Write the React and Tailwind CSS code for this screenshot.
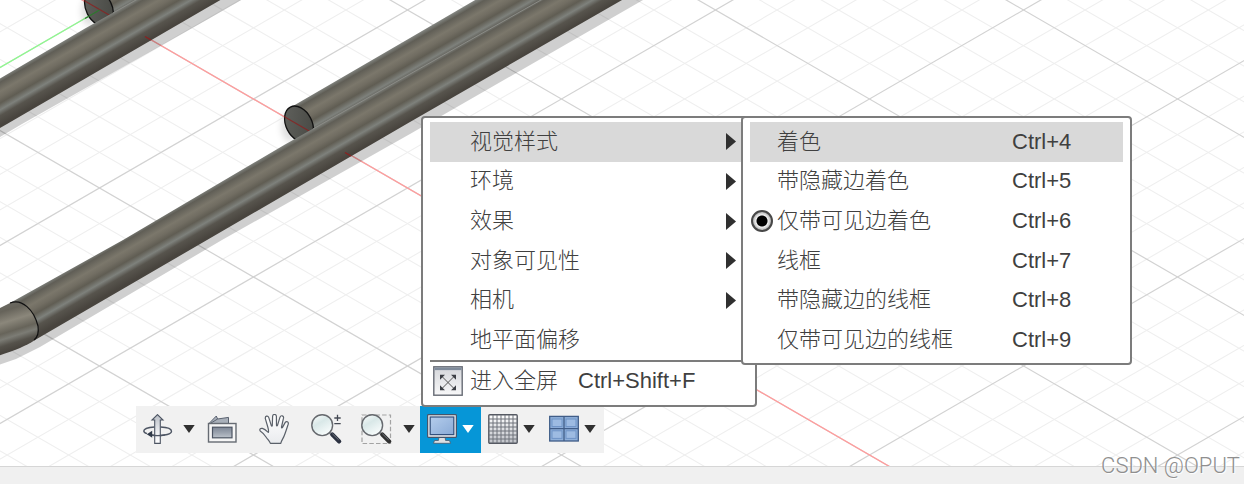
import clsx from 'clsx';

const viewItems = [
  { label: '视觉样式', submenu: true, active: true },
  { label: '环境', submenu: true },
  { label: '效果', submenu: true },
  { label: '对象可见性', submenu: true },
  { label: '相机', submenu: true },
  { label: '地平面偏移' },
];

const visualStyles = [
  { label: '着色', shortcut: 'Ctrl+4', active: true },
  { label: '带隐藏边着色', shortcut: 'Ctrl+5' },
  { label: '仅带可见边着色', shortcut: 'Ctrl+6', checked: true },
  { label: '线框', shortcut: 'Ctrl+7' },
  { label: '带隐藏边的线框', shortcut: 'Ctrl+8' },
  { label: '仅带可见边的线框', shortcut: 'Ctrl+9' },
];

// Ground plane: every fifth line is a major one
const ORIGIN = { x: 253.5, y: 99 };
const STEP = 61.6;
const SLOPE = 89 / 154;
const REACH = 1600;
const gridSteps = Array.from({ length: 81 }, (_, i) => i - 40);

function GridLines({ major }) {
  return (
    <g stroke={major ? '#d2d2d2' : '#efefef'} strokeWidth={major ? 1.2 : 1.1}>
      {gridSteps
        .filter((k) => (k % 5 === 0) === major)
        .map((k) => {
          const x = ORIGIN.x + k * STEP;
          const dy = REACH * SLOPE;
          return (
            <g key={k}>
              <line x1={x - REACH} y1={ORIGIN.y - dy} x2={x + REACH} y2={ORIGIN.y + dy} />
              <line x1={x - REACH} y1={ORIGIN.y + dy} x2={x + REACH} y2={ORIGIN.y - dy} />
            </g>
          );
        })}
    </g>
  );
}

function Tubes({ transform }) {
  return (
    <g transform={transform}>
      {/* shadow on the ground */}
      <path d="M-10 368 L16 359 L40 347 L222 240 L410 134 L650 -4 L600 -4 L30 330 L-10 350 Z" fill="#000" fillOpacity="0.19" />
      <ellipse cx="290" cy="127" rx="9" ry="15" fill="#000" fillOpacity="0.12" filter="url(#soft)" />

      {/* rear tube */}
      <path d="M293 106 L410 38 L482 -4 L560 -4 L410 80 L305 142 Z" fill="url(#rear)" />
      <ellipse cx="299" cy="124" rx="13" ry="19" transform="rotate(-27 299 124)" fill="url(#face)" stroke="#111" strokeWidth="1.3" />
      <path d="M284 116.6 L310 131.6" stroke="#8d1f1f" strokeWidth="1.1" strokeOpacity="0.8" />

      {/* front tube */}
      <path d="M10 303 L123 240 L285 144.5 L410 74 L548 -4 L629 -4 L410 122 L207 240 L35 340 Z" fill="url(#front)" />
      <path d="M313 129 L410 74 L548 -4" stroke="#8a8b86" strokeWidth="1" fill="none" />

      {/* elbow */}
      <path d="M-10 313 L10 303 C22 298 34 310 38 326 C39 333 38 337 35 340 C24 347 12 352 -10 358 Z" fill="url(#elbow)" />
      <path d="M10 303 C22 298 34 310 38 326 C39 333 38 337 34 340" stroke="#111" strokeWidth="1.2" fill="none" />
      <path d="M345 152.5 L351 156" stroke="#8d1f1f" strokeWidth="1.2" />
    </g>
  );
}

function TubeStops() {
  return (
    <>
      <stop offset="0" stopColor="#858783" />
      <stop offset="0.05" stopColor="#74756f" />
      <stop offset="0.11" stopColor="#605e56" />
      <stop offset="0.3" stopColor="#7b776b" />
      <stop offset="0.42" stopColor="#716d62" />
      <stop offset="0.54" stopColor="#605d53" />
      <stop offset="0.68" stopColor="#7e817c" />
      <stop offset="0.8" stopColor="#57544d" />
      <stop offset="1" stopColor="#48443e" />
    </>
  );
}

function Scene() {
  return (
    <svg className="absolute inset-0 h-full w-full" aria-hidden="true">
      <defs>
        <linearGradient id="front" gradientUnits="userSpaceOnUse" x1="285" y1="144" x2="306" y2="180.5">
          <TubeStops />
        </linearGradient>
        <linearGradient id="rear" gradientUnits="userSpaceOnUse" x1="293" y1="105" x2="314" y2="141.5">
          <TubeStops />
        </linearGradient>
        <linearGradient id="elbow" gradientUnits="userSpaceOnUse" x1="8" y1="303" x2="22" y2="347">
          <stop offset="0" stopColor="#6b6a63" />
          <stop offset="0.14" stopColor="#66635a" />
          <stop offset="0.38" stopColor="#8b877b" />
          <stop offset="0.6" stopColor="#67645a" />
          <stop offset="0.72" stopColor="#7c7c75" />
          <stop offset="0.86" stopColor="#55524b" />
          <stop offset="1" stopColor="#48443e" />
        </linearGradient>
        <linearGradient id="face" x1="0" y1="0" x2="1" y2="1">
          <stop offset="0" stopColor="#62635f" />
          <stop offset="1" stopColor="#454641" />
        </linearGradient>
        <filter id="soft" x="-50%" y="-50%" width="200%" height="200%">
          <feGaussianBlur stdDeviation="3" />
        </filter>
      </defs>
      <GridLines major={false} />
      <GridLines major />
      <line x1={ORIGIN.x - 308} y1={99} x2={99.5} y2={10} stroke="#8dfa8d" strokeWidth="1.3" />
      <line x1={80} y1={-1.3} x2={ORIGIN.x + REACH} y2={ORIGIN.y + REACH * SLOPE} stroke="#ff9c9c" strokeWidth="1.3" />
      <Tubes transform="translate(-200 -116)" />
      <Tubes />
      <line x1="85" y1="18.4" x2="99.5" y2="10" stroke="#2c7a2c" strokeWidth="1.2" />
    </svg>
  );
}

function OrbitIcon() {
  return (
    <svg width="30" height="30" viewBox="0 0 30 30" fill="none">
      <path d="M11.5 13 C5 13.5 .8 15 .8 17 C.8 18.2 2 19 4 19.7" stroke="#4d5563" strokeWidth="1.4" />
      <path d="M17.5 13 C24 13.3 28.5 15 28.5 17.2 C28.5 20 22 21.8 14 21.6 L8 21" stroke="#4d5563" strokeWidth="1.4" />
      <path d="M14.5 .6 L20 6 H17.3 V29.4 H11.7 V6 H9 Z" fill="url(#orbitFill)" stroke="#4d5563" strokeWidth="1.1" />
      <path d="M8 21 C13 22 18 21.7 22 20.8" stroke="#4d5563" strokeWidth="1.3" />
      <path d="M3.8 20.3 L9.2 16.8 V23.8 Z" fill="#2f3948" />
      <defs>
        <linearGradient id="orbitFill" x1="0" y1="0" x2="0" y2="1">
          <stop offset="0" stopColor="#b8bdc5" />
          <stop offset="0.6" stopColor="#eceef1" />
          <stop offset="1" stopColor="#fff" />
        </linearGradient>
      </defs>
    </svg>
  );
}

function LookAtIcon() {
  return (
    <svg width="30" height="30" viewBox="0 0 30 30">
      <defs>
        <linearGradient id="lookFill" x1="0" y1="0" x2="0" y2="1">
          <stop offset="0" stopColor="#7d8695" />
          <stop offset="0.5" stopColor="#9aa2ae" />
          <stop offset="1" stopColor="#bcc2ca" />
        </linearGradient>
      </defs>
      <path d="M2 9.5 L9.3 2 L10.6 5 L21.5 3.4 V9.5 Z" fill="#a9b0ba" stroke="#5a6270" strokeWidth="1" />
      <path d="M4 9 L10.6 5" stroke="#5a6270" strokeWidth="1" />
      <rect x="1.5" y="9.5" width="27.5" height="18.5" fill="#f6f6f6" stroke="#666b73" strokeWidth="1.4" />
      <rect x="5.5" y="13.2" width="19.5" height="10.6" fill="url(#lookFill)" stroke="#4d5563" strokeWidth="1.2" />
    </svg>
  );
}

function PanIcon() {
  return (
    <svg width="30" height="30" viewBox="0 0 30 30">
      <defs>
        <linearGradient id="handFill" x1="0" y1="0" x2="0" y2="1">
          <stop offset="0" stopColor="#fff" />
          <stop offset="1" stopColor="#e9ebee" />
        </linearGradient>
      </defs>
      <path
        d="M11.4 29.4 C10.6 27 8.6 25.6 7 23 C5.2 20 3.6 18.6 1.2 17 C.2 15.4 1.4 14 3.4 14.4 C5.8 15 7.8 17 9.3 18.4 C10 17.6 9.4 15.2 8.8 13 L6.4 4.8 C5.8 2 8.8 1 9.8 3.6 L12.3 11.6 C12.7 12.4 13.3 12.2 13.3 11.4 L13.6 2.4 C13.8 -.2 17.2 -.2 17.4 2.4 L17.5 11.4 C17.6 12.2 18.2 12.2 18.5 11.4 L21 3.2 C21.9 .8 25 1.6 24.5 4.2 L22.5 13 C22.4 14 23 14.2 23.5 13.4 L26.1 8.6 C27.4 6.8 29.9 7.8 29.2 10.2 C27.8 14.6 26.6 18.4 25.2 21.8 C24.2 24.6 22.4 26.2 21.8 29.4 Z"
        fill="url(#handFill)"
        stroke="#5a6069"
        strokeWidth="1.2"
        strokeLinejoin="round"
      />
    </svg>
  );
}

function Lens({ handle = '#2b3140' }) {
  return (
    <>
      <defs>
        <linearGradient id="lensFill" x1="0" y1="0" x2="0.6" y2="1">
          <stop offset="0" stopColor="#fff" />
          <stop offset="0.45" stopColor="#d9e8e8" />
          <stop offset="1" stopColor="#f8fcfc" />
        </linearGradient>
      </defs>
      <path d="M18.5 18.5 L22 22" stroke="#8a8d92" strokeWidth="2.4" />
      <path d="M21.3 20.6 L28.2 27.4" stroke={handle} strokeWidth="4.2" strokeLinecap="round" />
      <path d="M21.6 20 L27.4 25.6" stroke="#70757e" strokeWidth="1" strokeLinecap="round" />
      <circle cx="11.2" cy="11.2" r="10.4" fill="url(#lensFill)" stroke="#66696e" strokeWidth="1.4" />
    </>
  );
}

function ZoomIcon() {
  return (
    <svg width="30" height="30" viewBox="0 0 30 30" overflow="visible">
      <Lens />
      <path d="M26.5 .8 V7 M23.3 4 H29.7 M23.3 9.6 H29.7" stroke="#454a54" strokeWidth="1.3" />
    </svg>
  );
}

function FitIcon() {
  return (
    <svg width="30" height="30" viewBox="0 0 30 30" overflow="visible">
      <rect x="1" y="1" width="28.5" height="28.5" fill="none" stroke="#a3a3a3" strokeWidth="1.2" strokeDasharray="4.5 2.2" />
      <Lens handle="#303030" />
    </svg>
  );
}

function DisplayIcon() {
  return (
    <svg width="30" height="30" viewBox="0 0 30 30">
      <defs>
        <linearGradient id="screenFill" x1="0" y1="0" x2="1" y2="1">
          <stop offset="0" stopColor="#b4cdec" />
          <stop offset="1" stopColor="#8aaad6" />
        </linearGradient>
      </defs>
      <path d="M12 23 H18 L18.6 26.5 H22.5 L23.5 29.3 H6.5 L7.5 26.5 H11.4 Z" fill="#dcdfe3" stroke="#4c5a6c" strokeWidth="0.8" />
      <rect x="0.6" y="0.6" width="28.8" height="22.8" rx="0.8" fill="#e6e8eb" stroke="#46566c" strokeWidth="1.2" />
      <rect x="3.2" y="3" width="23.6" height="17.6" fill="url(#screenFill)" stroke="#33507c" strokeWidth="1.2" />
    </svg>
  );
}

function GridIcon() {
  const lines = [5, 9, 13, 17, 21, 25];
  return (
    <svg width="30" height="30" viewBox="0 0 30 30">
      <defs>
        <linearGradient id="gridFill" x1="0" y1="0" x2="0" y2="1">
          <stop offset="0" stopColor="#fff" />
          <stop offset="1" stopColor="#bfc2c8" />
        </linearGradient>
      </defs>
      <rect x="0.8" y="0.8" width="28.4" height="28.4" rx="1" fill="url(#gridFill)" stroke="#555962" strokeWidth="1.4" />
      {lines.map((n) => (
        <path key={n} d={`M${n} 1 V29 M1 ${n} H29`} stroke="#6e727b" strokeWidth="1" />
      ))}
    </svg>
  );
}

function ViewportsIcon() {
  return (
    <svg width="30" height="30" viewBox="0 0 30 30">
      <rect x="0.7" y="2.4" width="28.6" height="24.6" fill="#8fb0da" stroke="#405d88" strokeWidth="1.3" />
      {[3, 17].map((x) =>
        [5, 16.8].map((y) => (
          <rect key={`${x}-${y}`} x={x} y={y} width="10" height="7.6" fill="#9dbbe2" stroke="#6e93c6" strokeWidth="1" />
        ))
      )}
      <path d="M15 2.4 V27 M.7 14.7 H29.3" stroke="#405d88" strokeWidth="1.3" />
    </svg>
  );
}

function FullscreenIcon() {
  return (
    <svg width="30" height="30" viewBox="0 0 30 30">
      <defs>
        <linearGradient id="fullFill" x1="0" y1="0" x2="0" y2="1">
          <stop offset="0" stopColor="#d4d6da" />
          <stop offset="1" stopColor="#f8f8f9" />
        </linearGradient>
      </defs>
      <rect x="0.8" y="0.8" width="28.4" height="28.4" fill="url(#fullFill)" stroke="#666b74" strokeWidth="1.4" />
      <rect x="1.5" y="1.5" width="27" height="2.6" fill="#7f8b9b" />
      <path d="M9 10.5 L21 22.5 M21 10.5 L9 22.5" stroke="#555" strokeWidth="1" />
      <path d="M7 8.7 H12 L7 13.7 Z M23 8.7 H18 L23 13.7 Z M7 24.3 H12 L7 19.3 Z M23 24.3 H18 L23 19.3 Z" fill="#3c3f45" />
    </svg>
  );
}

function DownArrow() {
  return (
    <svg width="12" height="8" viewBox="0 0 12 8">
      <path d="M0.3 0 H11.7 L6 8 Z" fill="currentColor" />
    </svg>
  );
}

function RightArrow() {
  return (
    <svg width="10" height="17" viewBox="0 0 10 17">
      <path d="M0 0 L10 8.5 L0 17 Z" fill="#303030" />
    </svg>
  );
}

function VisualStyleMenu() {
  return (
    <div className="absolute -top-[2px] left-[318px] w-[391px] rounded-[4px] border-2 border-[#7c7c7c] bg-white px-[7px] pt-1 pb-[3px]">
      <div className="grid h-[238px] grid-rows-6" role="radiogroup" aria-label="视觉样式">
        {visualStyles.map((item) => (
          <label
            key={item.label}
            className={clsx('grid grid-cols-[27px_1fr_111px] items-center', item.active && 'bg-[#d9d9d9]')}
          >
            <input
              type="radio"
              name="visual-style"
              defaultChecked={item.checked}
              className="ml-px size-[22px] appearance-none rounded-full checked:border-2 checked:border-[#484848] checked:bg-[radial-gradient(circle,#000_0_5px,#f2f2f2_6px,#b4b4b4_9px)]"
            />
            <span>{item.label}</span>
            <kbd className="font-[inherit] font-normal">{item.shortcut}</kbd>
          </label>
        ))}
      </div>
    </div>
  );
}

function DisplayMenu() {
  return (
    <div className="absolute bottom-[46px] left-px w-[336px] rounded-[4px] border-2 border-[#7c7c7c] bg-white px-[7px] pt-1 pb-[5px] text-[22px] leading-7 font-light whitespace-nowrap text-[#404040]">
      <div className="grid h-[238px] grid-rows-6">
        {viewItems.map((item) => (
          <button
            key={item.label}
            type="button"
            className={clsx('flex items-center justify-between pr-3 pl-10 text-left', item.active && 'bg-[#d9d9d9]')}
          >
            <span>{item.label}</span>
            {item.submenu && <RightArrow />}
          </button>
        ))}
      </div>
      <hr className="border-t-2 border-[#7c7c7c]" />
      <button type="button" className="flex h-[38px] w-full items-center pl-[3px] text-left">
        <FullscreenIcon />
        <span className="ml-[7px]">进入全屏</span>
        <kbd className="ml-5 font-[inherit] font-normal">Ctrl+Shift+F</kbd>
      </button>
      <VisualStyleMenu />
    </div>
  );
}

function Toolbar() {
  return (
    <div className="absolute bottom-[13px] left-[136px] flex h-[47px] bg-[#f1f1f1] pr-px text-[#303030]">
      <button type="button" aria-label="动态观察" className="flex w-[60px] items-center gap-[10px] pb-px pl-[7px]">
        <OrbitIcon />
        <DownArrow />
      </button>
      <button type="button" aria-label="观察方向" className="flex w-[52px] items-center justify-center pb-px">
        <LookAtIcon />
      </button>
      <button type="button" aria-label="平移" className="flex w-[52px] items-center justify-center pb-px">
        <PanIcon />
      </button>
      <button type="button" aria-label="缩放" className="flex w-[52px] items-center justify-center pb-px">
        <ZoomIcon />
      </button>
      <button type="button" aria-label="缩放窗口" className="flex w-[68px] items-center gap-3 pb-px pl-[9px]">
        <FitIcon />
        <DownArrow />
      </button>
      <div className="relative flex">
        <button type="button" aria-label="显示设置" className="flex items-center gap-[5px] bg-[#0696d7] px-[7px] pb-px text-white">
          <DisplayIcon />
          <DownArrow />
        </button>
        <DisplayMenu />
      </div>
      <button type="button" aria-label="栅格和捕捉" className="flex items-center gap-[5px] px-[7px] pb-px">
        <GridIcon />
        <DownArrow />
      </button>
      <button type="button" aria-label="视口" className="flex items-center gap-[5px] px-[7px] pb-px">
        <ViewportsIcon />
        <DownArrow />
      </button>
    </div>
  );
}

export default function App() {
  return (
    <div className="relative flex h-screen flex-col overflow-hidden bg-white font-['Liberation_Sans','Noto_Sans_CJK_SC',sans-serif]">
      <main className="relative flex-1">
        <Scene />
        <Toolbar />
      </main>
      <footer className="h-[18px] border-t border-[#d6d6d6] bg-[#f0f0f0]" />
      <p className="absolute right-1 bottom-1 font-['Roboto',sans-serif] text-[22px] leading-7 font-light text-[#8f8f8f] [text-shadow:1px_1px_1px_#fff]">
        CSDN @OPUT
      </p>
    </div>
  );
}
